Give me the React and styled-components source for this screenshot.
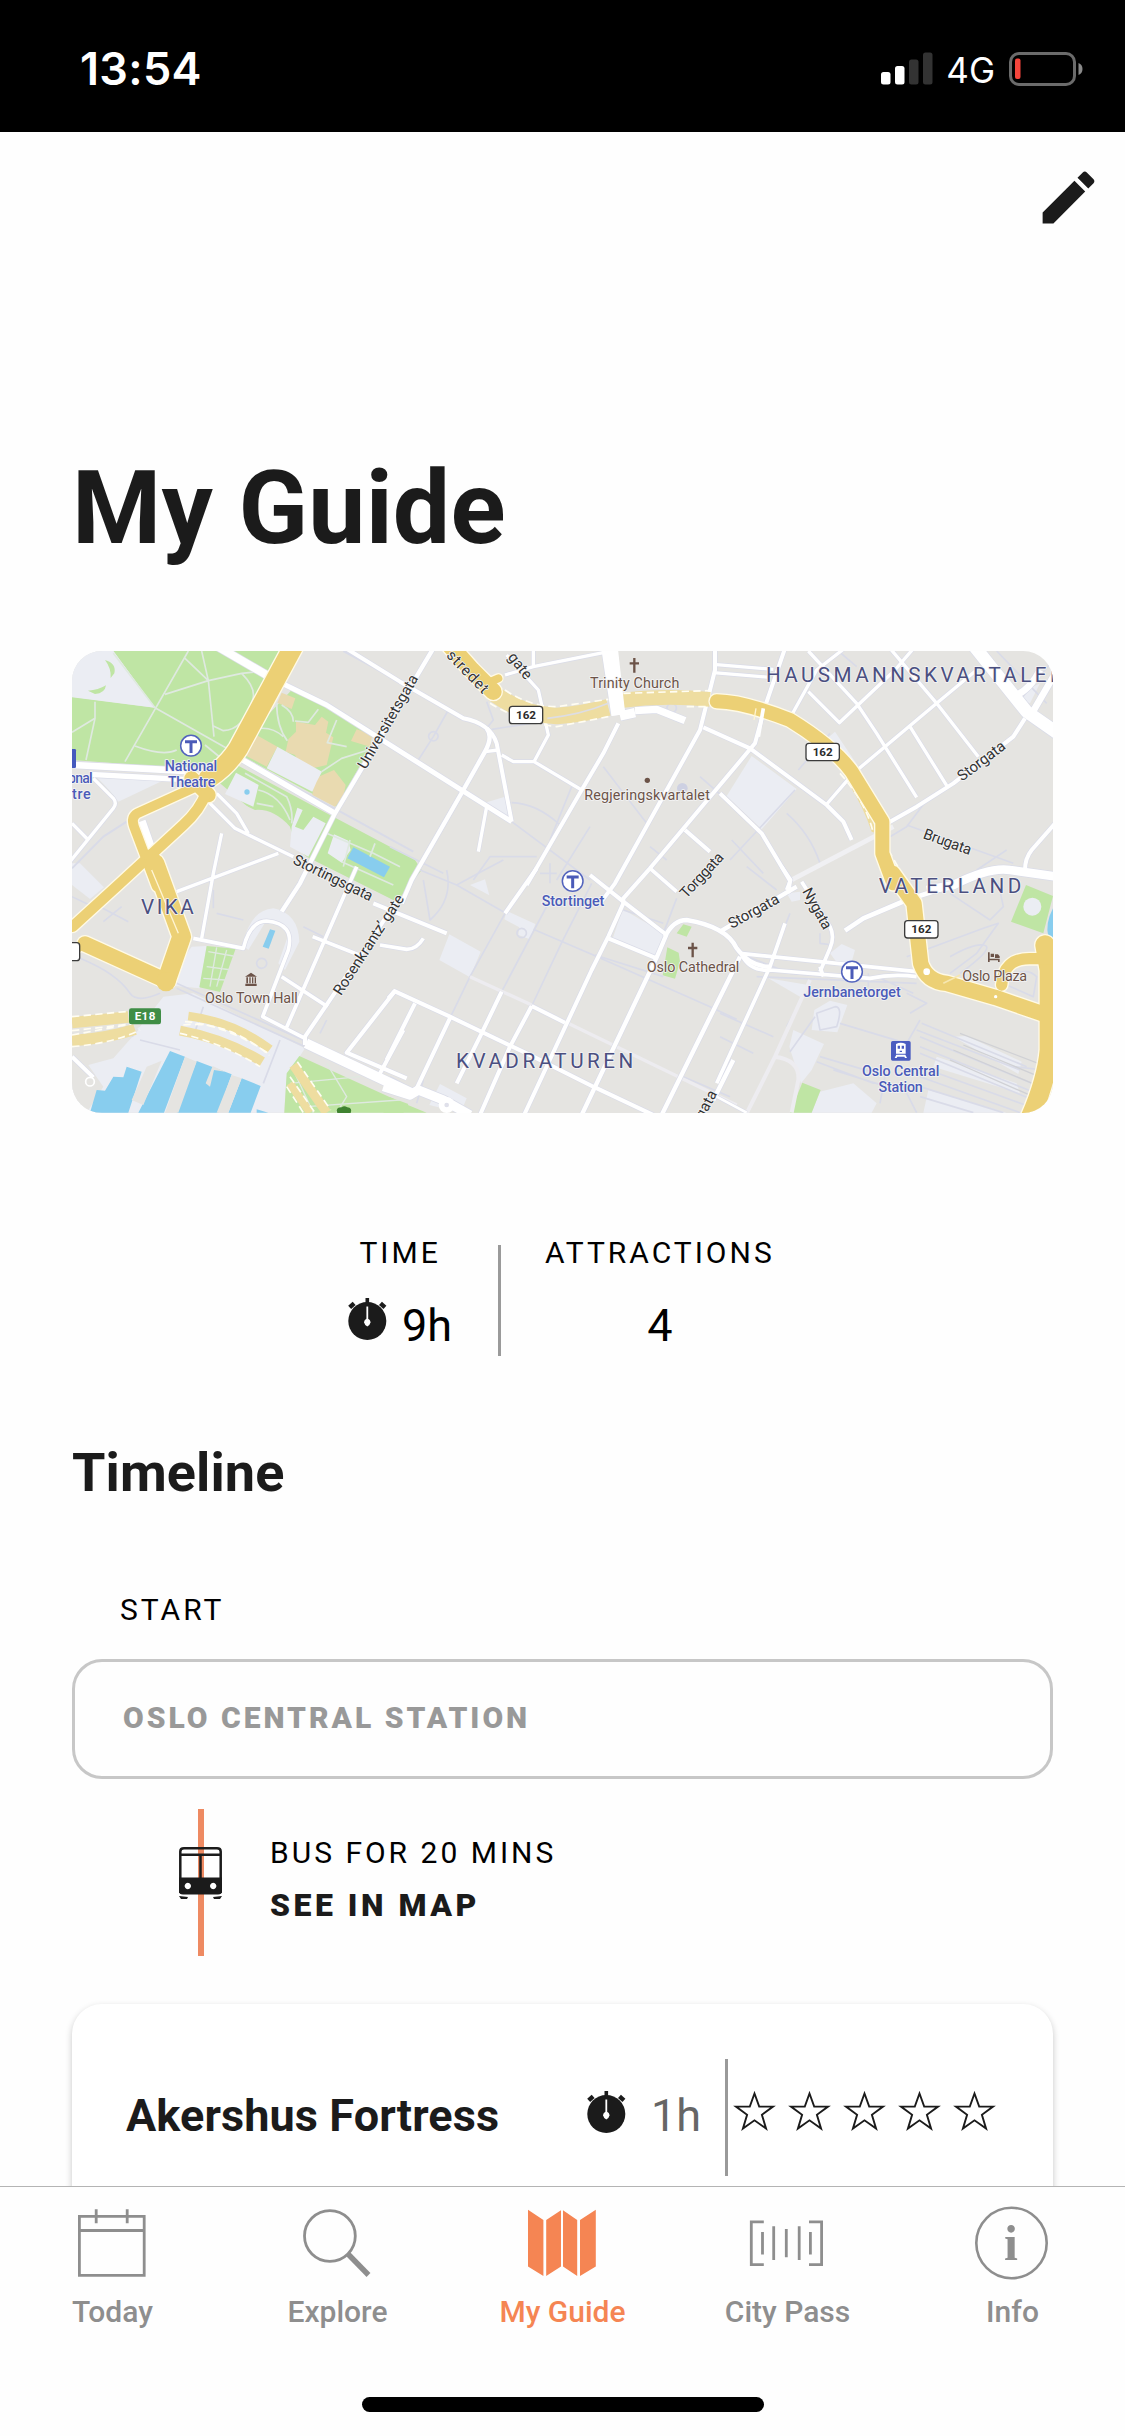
import React from "react";
import styled, { createGlobalStyle } from "styled-components";

const ink = "#1b1b1b";
const orange = "#f58553";
const grey = "#8e8e8e";

const GlobalStyle = createGlobalStyle`
  *, *::before, *::after { box-sizing: border-box; }
  body {
    margin: 0;
    background: #fefefe;
    font-family: Roboto, "Liberation Sans", sans-serif;
    color: #000;
  }
  h1, h2, h3, p { margin: 0; }
  svg { display: block; flex: none; }
`;

const Screen = styled.div`
  width: 1125px;
  height: 2436px;
  display: flex;
  flex-direction: column;
  overflow: hidden;
  background: #fefefe;
`;

/* ---------- status bar ---------- */

const StatusBar = styled.header`
  flex: none;
  height: 132px;
  padding: 6px 42px 0 80px;
  display: flex;
  align-items: center;
  justify-content: space-between;
  background: #000;
  color: #fff;
  font-family: Inter, Roboto, sans-serif;
`;
const Clock = styled.span`
  font-size: 45px;
  font-weight: 600;
  line-height: 54px;
  letter-spacing: 0.3px;
`;
const StatusRight = styled.div`
  display: flex;
  align-items: center;
`;
const Network = styled.span`
  margin: 1px 14px 0 13px;
  font-size: 35px;
  line-height: 40px;
`;

const Signal = () => (
  <svg width="52" height="34" viewBox="0 0 52 34">
    <rect x="0" y="20" width="9.5" height="12.5" rx="2.5" fill="#fff" />
    <rect x="14" y="14" width="9.5" height="18.5" rx="2.5" fill="#fff" />
    <rect x="28" y="7.5" width="9.5" height="25" rx="2.5" fill="#333" />
    <rect x="42" y="0.5" width="9.5" height="32" rx="2.5" fill="#333" />
  </svg>
);

const Battery = () => (
  <svg width="74" height="34" viewBox="0 0 74 34">
    <rect x="1.5" y="1.5" width="64" height="31" rx="8.5" fill="none" stroke="#6b6b6b" strokeWidth="3" />
    <path d="M69.5 11 Q73.5 12.5 73.5 17 T69.5 23 Z" fill="#8a8a8a" />
    <rect x="6" y="6.5" width="5.5" height="20.5" rx="2" fill="#f4453c" />
  </svg>
);

/* ---------- page content ---------- */

const Content = styled.main`
  flex: 1;
  min-height: 0;
  overflow: hidden;
  display: flex;
  flex-direction: column;
  padding: 0 72px;
`;
const Toolbar = styled.div`
  flex: none;
  display: flex;
  justify-content: flex-end;
  margin: 31px -50px 0 0;
`;
const Title = styled.h1`
  flex: none;
  margin-top: 216px;
  font-size: 102px;
  line-height: 120px;
  font-weight: 700;
  letter-spacing: 0.2px;
  color: ${ink};
`;
const MapCard = styled.section`
  flex: none;
  margin-top: 83px;
  height: 462px;
  border-radius: 30px;
  overflow: hidden;
`;
const Stats = styled.section`
  flex: none;
  display: flex;
  align-items: flex-start;
  height: 121px;
  margin-top: 122px;
  padding-left: 276px;
`;
const Stat = styled.div`
  display: flex;
  flex-direction: column;
  align-items: center;
  gap: 28px;
  min-width: ${(p) => p.$width}px;
`;
const Divider = styled.div`
  flex: none;
  width: 3px;
  height: ${(p) => p.$height}px;
  margin: ${(p) => p.$margin};
  background: #9a9a9a;
`;
const Caps = styled.p`
  font-size: 30px;
  line-height: 36px;
  letter-spacing: 3px;
  font-weight: ${(p) => p.$weight || 400};
  color: ${(p) => p.$color || "#000"};
  white-space: nowrap;
`;
const StatValue = styled.div`
  display: flex;
  gap: 15px;
  font-size: 45px;
  line-height: 54px;
  svg { margin-top: -1px; }
`;
const SectionTitle = styled.h2`
  flex: none;
  margin-top: 85px;
  font-size: 54px;
  line-height: 64px;
  font-weight: 700;
  letter-spacing: 0.1px;
  color: ${ink};
`;
const StartLabel = styled.div`
  flex: none;
  margin: 87px 0 31px 48px;
`;
const StartField = styled.div`
  flex: none;
  height: 120px;
  display: flex;
  align-items: center;
  padding: 0 48px 2px;
  border: 3px solid #c7c7c7;
  border-radius: 30px;
`;
const Leg = styled.section`
  flex: none;
  display: flex;
  height: 147px;
  margin-top: 30px;
  padding-left: 107px;
`;
const Track = styled.div`
  width: 43px;
  margin-right: 48px;
  display: flex;
  justify-content: center;
  padding-top: 38px;
  background: linear-gradient(#ee8a62, #ee8a62) center / 6px 100% no-repeat;
`;
const LegText = styled.div`
  display: flex;
  flex-direction: column;
  gap: 16px;
  padding-top: 26px;
`;
const MapLink = styled(Caps)`
  font-size: 32px;
  font-weight: 900;
  letter-spacing: 3.5px;
  color: ${ink};
`;
const Attraction = styled.article`
  flex: none;
  display: flex;
  align-items: flex-start;
  height: 300px;
  margin-top: 48px;
  padding: 55px 54px 0;
  border-radius: 30px;
  background: #fff;
  box-shadow: 0 3px 7px rgba(0, 0, 0, 0.22);
`;
const AttractionName = styled.h3`
  flex: 0 0 461px;
  margin-top: 30px;
  font-size: 45px;
  line-height: 54px;
  font-weight: 700;
  letter-spacing: 0.1px;
  color: ${ink};
`;
const Duration = styled.div`
  flex: 0 0 138px;
  display: flex;
  gap: 25px;
  margin-top: 30px;
  font-size: 45px;
  line-height: 54px;
  color: #666;
  svg { margin-top: 2px; }
`;
const Stars = styled.div`
  display: flex;
  gap: 12px;
  margin: 31px 0 0 5px;
`;

const Stopwatch = () => (
  <svg width="39" height="42" viewBox="0 0 39 42">
    <g fill={ink}>
      <circle cx="19.3" cy="23" r="19" />
      <rect x="17.5" y="0" width="3.6" height="7" />
      <rect x="-3" y="-2.2" width="6" height="4.4" transform="translate(3.9 7.3) rotate(-42)" />
      <rect x="-3" y="-2.2" width="6" height="4.4" transform="translate(34.7 7.3) rotate(42)" />
    </g>
    <path d="M19.3 8.5 V22" stroke="#fff" strokeWidth="1.8" />
    <path d="M19.3 20.5 Q22.6 21.5 22.5 24.5 Q22 27 19.3 28.5 Q16.6 27 16.1 24.5 Q16 21.5 19.3 20.5 Z" fill="#fff" />
  </svg>
);

const Pencil = () => (
  <svg width="69" height="69" viewBox="0 0 24 24" fill={ink}>
    <path d="M3 17.25V21h3.75L17.81 9.94l-3.75-3.75L3 17.25zM20.71 7.04c.39-.39.39-1.02 0-1.41l-2.34-2.34c-.39-.39-1.02-.39-1.41 0l-1.83 1.83 3.75 3.75 1.83-1.83z" />
  </svg>
);

const Bus = () => (
  <svg width="43" height="52" viewBox="0 0 43 52">
    <path d="M1.3 46 V4.5 Q1.3 1.3 5 1.3 H38 Q41.700 1.3 41.7 4.5 V46 M1.3 7.8 H41.7 M21.5 8 V32" fill="none" stroke={ink} strokeWidth="2.5" />
    <path fillRule="evenodd" fill={ink} d="M0 30.5 H43 V44 Q43 47.5 39 47.5 H4 Q0 47.5 0 44 Z M8.8 35.8 a3.2 3.2 0 1 0 .01 0 Z M34.2 35.8 a3.2 3.2 0 1 0 .01 0 Z" />
    <path d="M0 49 L9 50 L8 52 H2 Z M43 49 L34 50 L35 52 H41 Z" fill={ink} />
  </svg>
);

const Star = () => (
  <svg width="43" height="42" viewBox="0 0 43 42">
    <path d="M21.5 3.5 L26.2 16.6 H40 L28.9 24.8 L33.1 38.6 L21.5 30.3 L9.9 38.6 L14.1 24.8 L3 16.6 H16.8 Z" fill="none" stroke={ink} strokeWidth="1.9" />
  </svg>
);

/* ---------- city map ---------- */

/* The city is split into six sectors; each shape is given relative to its sector. */
const NW = "0 0", SW = "0 690", N = "990 0", S = "990 690", NE = "1980 0", SE = "1980 690";
const C = {
  land: "#e5e4e1", park: "#bfe5a4", plaza: "#ebedf3", tan: "#e9dab0", water: "#88cdee",
  yellow: "#ecd075", tunnel: "#eedda0", lav: "#d9dbe8", white: "#fff",
};

const areas = [
  [NW, C.park, "M160 33 H680 L500 360 L375 385 L36 360 V170 L285 203Z"],
  [NW, C.plaza, "M36 33 H160 L285 203 L36 172Z"],
  [NW, C.park, "M135 60 Q170 70 163 100 L152 114 Q154 85 135 60Z M84 152 Q115 150 138 136 Q135 160 105 162Z"],
  [NW, C.park, "M700 145 L935 275 L930 325 L830 500 L550 350 L600 250Z"],
  [NW, C.tan, "M665 158 L706 175 L695 207 L652 188Z M785 230 L805 245 L798 278 L820 292 L800 375 L745 388 L713 362 L705 345 L677 335 L685 298 L708 275 V245 L765 255Z M890 268 L937 285 L930 320 L873 303Z M588 284 L652 320 L620 380 L553 345Z M822 390 L857 435 L850 470 L825 500 L757 465 L765 415Z"],
  [NW, C.plaza, "M652 320 L786 395 L770 425 L757 455 L620 385Z M110 412 H330 L175 485 Q150 450 110 412Z"],
  [NW, C.park, "M525 372 L820 530 L1065 660 L1085 690 L1010 785 L740 650 L480 430Z"],
  [NW, C.land, "M470 455 L585 510 Q640 505 690 560 L705 610 L655 640 L540 570Z"],
  [NW, C.plaza, "M528 398 L596 435 L580 500 L495 462Z M712 503 L728 510 L705 560 L730 570 L760 530 L797 550 L745 650 L690 620 L695 560Z M822 583 L865 602 L872 630 L845 668 L803 640Z"],
  [NW, C.water, "M880 622 L990 680 L972 712 L862 655Z M553 456 a8 8 0 1 0 16 0 a8 8 0 1 0 -16 0Z"],
  [SW, C.plaza, "M36 -20 L60 -20 L132 52 L90 87 L36 45Z"],
  [SW, C.plaza, "M395 230 L440 228 L420 355 L345 348 Q370 260 395 230Z"],
  [SW, C.plaza, "M36 590 L240 470 L310 380 L400 370 L735 535 L680 620 L672 728 H36Z"],
  [SW, C.land, "M36 435 L205 420 L235 480 L160 565 L85 585 L130 650 L80 728 H36Z"],
  [SW, C.water, "M330 543 L375 560 L312 728 H235Z M410 573 L515 613 L475 728 H350Z M545 625 L602 648 L572 728 H505Z M200 590 L245 605 L205 728 H90 L110 660 L135 662 L160 620 L190 622Z M590 718 L625 728 H590Z"],
  [SW, C.land, "M260 590 L305 572 L250 705 L215 690Z M375 560 L410 575 L355 728 H315Z M515 615 L545 625 L505 728 H470Z M437 640 L458 588 L495 605 L462 600 L450 650Z"],
  [SW, C.park, "M440 228 L527 236 L480 366 L418 352Z M718 558 L1020 695 L1100 728 H673 L680 610Z"],
  [SW, C.plaza, "M548 225 Q570 120 640 115 Q715 130 718 215 L675 300 L655 280 L690 180 L620 150 L565 240Z"],
  [SW, C.water, "M630 178 L646 182 L626 236 L608 230Z"],
  [N, C.plaza, "M285 488 L345 470 L355 530Z"],
  [N, "#cdd0e2", "M861 445 a16 16 0 1 0 32 0 a16 16 0 1 0 -32 0Z"],
  [S, C.plaza, "M178 193 L272 245 L240 322 L148 270Z M350 123 L436 162 L420 208 L385 195 L388 172 L343 148Z M698 118 L827 192 L800 262 L668 205Z M240 45 L285 28 L298 76Z M150 642 L230 685 L212 728 L118 705Z"],
  [S, C.park, "M832 232 L866 248 L870 275 L855 326 L818 316Z M880 163 L905 170 L890 200 L860 190Z M0 682 L55 702 L40 728 H-20Z"],
  [NE, C.plaza, "M345 275 L412 375 L375 372 L310 305Z M95 348 L230 447 L125 568 L20 468Z M880 170 L960 130 L930 190Z"],
  [NE, C.tunnel, "M385 430 L425 440 L470 580 L455 575 Q430 500 385 430Z"],
  [SE, C.plaza, "M330 250 L365 222 L405 240 L395 275 L360 290Z M220 480 L312 522 L275 600 L243 640 L208 530Z M283 420 L330 392 L382 405 L352 487 L275 480Z M200 70 L240 65 L240 90 L215 95Z M300 665 L400 640 L470 700 L455 728 H275Z M700 500 L740 498 L905 575 L895 612Z M650 560 L890 640 L900 670 L640 590Z M625 660 L860 728 H610Z M145 325 L265 345 L240 380Z"],
  [SE, C.park, "M918 45 L999 78 L970 190 L873 155Z M247 638 L302 660 L275 728 H210Z"],
  [SE, C.plaza, "M910 110 a27 27 0 1 0 54 0 a27 27 0 1 0 -54 0Z"],
  [SE, C.water, "M999 115 Q975 160 985 200 L999 228Z"],
];

/* Footpaths and service roads: sector, width, path, colour */
const paths = [
  [NW, 5, "M385 33 L195 365 M375 55 L445 122 L315 163 M425 33 L445 122 L462 290 M445 122 L545 100 L620 92 M545 100 Q590 145 578 180 Q550 270 490 272 L460 258 M285 203 L500 325 M105 185 V235 L78 360 M105 235 L36 277 M225 318 Q310 350 350 330 M435 315 L490 360 M160 40 L285 203", "#dfe9e0"],
  [NW, 5, "M650 188 Q650 260 682 302 M665 195 Q700 215 700 245 M705 243 L745 247 L775 208 M600 265 Q640 262 670 290 M830 240 L802 308 L860 320 M925 330 L845 355 L785 395 M555 400 L680 470 Q700 510 695 550 M595 450 Q660 465 690 540 M590 490 L640 500 M800 580 L940 640 L1020 680 M845 665 L1000 735 M870 600 L850 680 M945 610 L930 650", "#dfe9e0"],
  [NW, 6, "M540 350 L1060 635 M850 33 L1020 125 M36 685 L130 590 L200 545", C.lav],
  [SW, 4, "M445 245 L520 258 M440 290 L515 300 M430 325 L495 330 M470 232 L450 350 M500 240 L470 350 M690 640 L900 620 M800 580 L860 680 L830 728 M700 600 L760 728 M740 710 L1020 690", "#dfe9e0"],
  [SW, 5, "M60 265 Q170 310 210 370 Q230 400 300 370 M350 340 L740 515 M350 355 L735 530 M100 100 L205 155 M130 155 L185 110 M460 60 V115 M430 410 L400 500 M660 510 L610 640 M240 510 L360 540 M800 450 L780 490 M605 265 a15 15 0 1 0 .1 0 M200 430 L180 470 L220 500 M36 80 L120 120 M470 130 L550 150 M730 170 L790 200", C.lav],
  [N, 5, "M175 210 L130 290 L85 360 M130 275 a14 14 0 1 0 .1 0 M290 185 L310 240 L290 265 M305 268 L455 245 M455 240 L470 240 M365 488 Q440 490 510 555 M365 545 L600 720 M640 380 L770 550 M545 440 L480 600 M930 410 L1010 480 M780 620 L830 660 M845 190 a14 14 0 1 0 .1 0 M600 560 L500 720 M250 720 L300 650 L440 650 M0 620 L160 700", C.lav],
  [S, 5, "M90 0 L200 45 L345 128 M200 45 L265 10 L340 -30 M100 30 L120 150 Q190 90 170 0 M345 130 L240 320 L182 440 M480 90 L335 365 M605 40 L515 218 L425 408 M430 178 L610 255 L960 410 L1040 448 M615 255 L820 320 M860 85 L820 190 M700 120 L820 160 M395 175 a14 14 0 1 0 .1 0 M880 620 L1020 680 M80 700 L100 630 M0 620 L130 690 M450 10 H500 M480 -20 V40", C.lav],
  [S, 10, "M240 320 L425 405 M525 455 L1040 705", "#edecf0"],
  [NE, 5, "M355 33 L410 80 M225 450 L30 660 M235 390 L330 280 M35 600 L130 700 M560 555 L880 670 M200 520 Q270 580 300 670 M620 480 L560 560 L510 590 M770 690 L860 630 M830 33 L980 190 M1000 60 L900 180", C.lav],
  [NE, 14, "M520 560 L205 725", "#f0f0f3"],
  [SE, 5, "M80 -10 L170 60 M210 130 L170 230 L150 290 M300 190 V220 L340 225 M210 545 L285 440 M70 255 L210 310 L330 320 M110 320 L590 340 M445 310 V350 M470 320 L580 370 M560 260 L790 175 L835 160 L770 250 L690 310 M690 70 L810 150 L850 110 L835 40 M690 260 Q760 220 790 225 Q830 230 720 310 M860 345 L940 380 L950 320 Q920 290 870 320 M300 560 L470 610 M290 575 L460 640 M340 600 L500 650 M270 340 L200 470 M0 430 L160 500 M290 430 L345 410 Q370 410 350 470 L300 480Z M360 460 L560 520 L600 450 M500 590 L480 700 M980 200 L960 260 M570 430 L620 400 L560 370 M590 480 L900 600 M605 460 L920 590 M600 500 L960 650 M600 530 L950 670 M600 550 L940 690 M600 590 L930 710 M600 620 L900 728 M600 650 L850 728 M600 680 L760 728 M550 650 L590 728 M880 590 L970 600 M0 500 L100 550", C.lav],
  [SE, 4, "M720 490 L980 590 M730 525 L970 625 M700 540 L960 650 M690 570 L940 680", "#d0d1d5"],
  [SE, 12, "M270 330 L165 560 L75 740 M165 560 Q240 570 235 630 L215 728", "#edecf0"],
];

/* White streets: sector, width, path */
const streets = [
  [NW, 24, "M470 18 L625 108"],
  [NW, 15, "M650 122 L800 195 L1355 545"],
  [NW, 20, "M40 375 L400 394"],
  [NW, 16, "M90 403 L400 420"],
  [NW, 10, "M100 415 L160 475 Q172 490 160 505 L30 665 M36 550 L85 600 M485 580 L460 700 L425 895 M350 755 L655 640 M440 480 L525 565 L700 650 M470 460 L530 520 L565 580"],
  [NW, 22, "M246 543 L280 640"],
  [NW, 17, "M545 358 L825 520"],
  [NW, 13, "M1120 25 L825 520 L720 730 L665 815"],
  [NW, 12, "M940 790 L1160 880 M850 20 L1020 125 L1210 235 Q1290 250 1310 310 L1355 545"],
  [SW, 11, "M400 205 L550 235 Q570 153 620 153 Q705 160 685 240 L608 440 L735 505 M665 320 L803 410 M890 -10 L680 472 M758 200 L905 258 M960 225 L1040 238 Q1070 238 1090 205"],
  [SW, 12, "M1020 80 L735 500 V525 M1005 363 L860 548 L1040 625 M1030 480 L960 610 M36 560 L100 622"],
  [SW, 30, "M738 520 L1060 672"],
  [N, 13, "M290 265 Q310 290 285 335 L220 450 L65 720 L35 790"],
  [N, 10, "M345 105 L430 80 L640 38 M430 33 V80 M350 45 L445 150 L475 285 L432 365 M285 335 L325 330 M335 345 L370 365 H432 L575 450 M290 500 L265 635"],
  [N, 12, "M685 250 L640 340 L575 450 L410 735"],
  [N, 42, "M655 25 L685 225"],
  [N, 28, "M690 228 L735 218"],
  [N, 22, "M735 212 L800 208 L885 242"],
  [N, 12, "M975 25 V90 L930 270 L675 730 L630 790 M940 262 L1080 325 L1310 495 L1360 545 L1385 600 M885 570 L960 635 M990 460 L1115 580 L1200 722 L1195 760"],
  [N, 12, "M1185 25 L1125 200 L1095 310 L780 685 L700 775 V790 L655 890 L605 990 L400 1430"],
  [N, 11, "M780 685 L860 755"],
  [S, 12, "M600 15 L700 95 L830 195 M655 205 L800 265 M10 362 L180 440 L430 560 L610 650 L790 735 M15 362 L-5 385 M75 400 L-10 570 M440 -5 L345 130 M182 440 L80 655 M335 365 L270 500 L200 640 M425 408 L360 530 L270 735 M425 408 L525 458"],
  [S, 13, "M830 192 L800 262 L575 735 M825 200 Q850 150 890 150 Q1010 170 1040 235 Q1080 290 1140 290 M990 185 L1220 50 M1050 260 L815 735 M1030 570 L970 690"],
  [S, 28, "M-20 650 L60 675 L85 660 L160 690 L240 735"],
  [NE, 10, "M-20 73 L160 88 M-20 98 L150 112 M265 33 L410 190 L470 280 L590 472 M380 20 L290 90 L215 225 M265 155 L358 248 L525 90 L585 20 M510 25 L650 190 L775 350 M318 495 L400 400 L650 190 L770 90 M570 260 L682 440"],
  [NE, 38, "M760 15 L920 215 L1020 285"],
  [NE, 20, "M930 230 L1000 110 M880 170 Q930 150 960 90"],
  [NE, 12, "M915 235 L880 290 L700 430 L590 500 L505 548 M1010 545 L935 630 Q915 655 915 690"],
  [SE, 26, "M620 60 L700 45 Q810 -10 870 0 L1010 20"],
  [SE, 14, "M375 182 L430 145 L560 90 L700 45"],
  [SE, 11, "M185 -10 L212 30 L200 60 M245 35 L330 170 Q345 200 330 235 L300 305 M60 250 L300 275 L590 305 M65 255 Q90 305 150 300 L450 325 Q520 310 590 320 M195 160 L150 290 L-10 640 M300 290 L310 320"],
  [SE, 8, "M-10 680 L80 728"],
];

const tunnels = [
  [SW, 34, "M36 458 L205 441 M36 512 Q140 505 225 478"],
  [SW, 26, "M385 438 Q520 455 630 538"],
  [SW, 30, "M360 482 Q490 505 607 575"],
  [SW, 28, "M700 585 L800 728"],
  [SW, 24, "M690 640 L750 728"],
  [N, 50, "M310 160 Q400 225 500 228 Q580 222 655 202"],
  [N, 44, "M690 182 Q820 165 960 178"],
];
const tunnelEdges = [
  [SW, "M36 440 L205 424 M36 482 L205 463 M36 495 L215 462 M36 530 Q160 520 240 480 M370 465 Q500 450 628 556 M360 490 Q490 520 600 590 M375 455 Q500 465 625 550 M712 575 L812 720 M690 620 L765 728 M680 650 L730 728"],
  [N, "M345 150 Q420 200 500 200 L655 178 M300 190 Q400 250 500 260 L655 230 M700 160 L955 152 M890 200 L960 200"],
  [NE, "M360 400 Q440 490 460 580 M505 630 L545 700"],
];

const highways = [
  [NW, 58, "M708 5 L535 325 Q500 380 445 415"],
  [NW, 44, "M395 415 L445 465"],
  [NW, 29, "M430 430 L232 520 Q212 532 222 560 L290 740"],
  [NW, 32, "M440 455 Q420 510 370 555 L180 730 L38 860"],
  [NW, 46, "M275 650 L350 850"],
  [SW, 56, "M285 -20 L365 200 L320 330"],
  [SW, 46, "M75 222 L318 332"],
  [SW, 22, "M80 215 L50 240"],
  [N, 50, "M170 5 L245 90 L310 155"],
  [N, 24, "M290 130 L325 115"],
  [N, 42, "M980 184 Q1060 185 1200 240 Q1330 320 1385 395 L1477 545 V640 L1510 730"],
  [SE, 46, "M518 10 L582 100 L602 280 Q620 335 680 340 L825 382 L970 432"],
  [SE, 58, "M975 225 L988 300 V540 Q980 630 930 745"],
  [SE, 34, "M845 345 Q850 265 930 266 L1010 266"],
];

/* Labels: x, y, text, kind, drawn length, angle */
const labels = [
  [393, 393, "National", "blue", 157], [395, 441, "Theatre", "blue", 142],
  [1539, 799, "Stortinget", "blue", 188], [2376, 1072, "Jernbanetorget", "blue", 292],
  [2522, 1308, "Oslo Central", "blue", 232], [2522, 1355, "Station", "blue", 133],
  [1724, 143, "Trinity Church", "brown", 268], [1761, 480, "Regjeringskvartalet", "brown", 377],
  [1899, 995, "Oslo Cathedral", "brown", 278], [2804, 1022, "Oslo Plaza", "brown", 194],
  [574, 1088, "Oslo Town Hall", "brown", 278],
];
const startLabels = [
  [243, 821, "VIKA", "area", 158, 0], [1188, 1283, "KVADRATUREN", "area", 532, 0],
  [2118, 127, "HAUSMANNSKVARTALEN", "area", 896, 0], [2456, 760, "VATERLAND", "area", 428, 0],
  [24, 430, "onal", "blue", 74, 0], [36, 478, "tre", "blue", 56, 0],
  [917, 390, "Universitetsgata", "road", 318, -60], [696, 670, "Stortingsgata", "road", 260, 26],
  [843, 1069, "Rosenkrantz’ gate", "road", 350, -57], [1157, 48, "stredet", "road", 160, 46],
  [1342, 52, "gate", "road", 88, 52], [1879, 777, "Torggata", "road", 168, -47],
  [2015, 867, "Storgata", "road", 167, -29], [2706, 425, "Storgata", "road", 167, -37],
  [2226, 754, "Nygata", "road", 135, 61], [2587, 594, "Brugata", "road", 150, 20],
  [1930, 1440, "gata", "road", 90, -62],
];
const labelStyle = {
  blue: { fill: "#4b5bb8", size: 43, weight: 500 },
  brown: { fill: "#6c5348", size: 43, weight: 400 },
  area: { fill: "#4b4f80", size: 62, weight: 400 },
  road: { fill: "#333", size: 45, weight: 400 },
};

const Label = ({ item, anchor }) => {
  const [x, y, text, kind, length, angle = 0] = item;
  const s = labelStyle[kind];
  return (
    <text
      transform={`translate(${x} ${y}) rotate(${angle})`}
      textAnchor={anchor}
      textLength={length}
      fontSize={s.size}
      fontWeight={s.weight}
      fill={s.fill}
      stroke="#f4f4f5"
      strokeWidth="5"
      strokeLinejoin="round"
      paintOrder="stroke"
    >
      {text}
    </text>
  );
};

const Lines = ({ items, color, extra = 0 }) =>
  items.map(([sector, width, d, own], i) => (
    <path key={i} transform={`translate(${sector})`} d={d} stroke={own || color} strokeWidth={width + extra} />
  ));

const Metro = ({ x, y }) => (
  <g transform={`translate(${x} ${y})`}>
    <circle r="31" fill="#fff" stroke="#5263bd" strokeWidth="4.5" />
    <path d="M-18 -12 H18 M0 -12 V22" stroke="#4b5bb8" strokeWidth="9" fill="none" />
  </g>
);
const Cross = ({ x, y }) => (
  <path transform={`translate(${x} ${y})`} d="M0 -22 V22 M-14 -6 H14" stroke="#6c5348" strokeWidth="7" />
);
const RouteBadge = ({ x, y }) => (
  <g transform={`translate(${x} ${y})`}>
    <rect x="-50" y="-26" width="100" height="52" rx="9" fill="#fff" stroke="#3b3b3b" strokeWidth="4" />
    <text y="12" textAnchor="middle" fontSize="35" fontWeight="700" fill="#2b2b2b" textLength="60">162</text>
  </g>
);

const CityMap = () => (
  <svg width="981" height="462" viewBox="36 33 2943 1386" preserveAspectRatio="none" fontFamily="Roboto, sans-serif">
    <rect x="36" y="33" width="2943" height="1386" fill={C.land} />
    {areas.map(([sector, fill, d], i) => (
      <path key={i} transform={`translate(${sector})`} d={d} fill={fill} />
    ))}
    <g fill="none" strokeLinejoin="round">
      <Lines items={paths} color={C.lav} />
      <Lines items={streets} color="#dadce8" extra={4} />
      <Lines items={streets} color={C.white} />
      <Lines items={tunnels} color={C.tunnel} />
      {tunnelEdges.map(([sector, d], i) => (
        <path key={i} transform={`translate(${sector})`} d={d} stroke="#fffdf2" strokeWidth="5" strokeDasharray="22 13" />
      ))}
      <path d="M1462 235 Q1560 225 1645 190" stroke="#dddde4" strokeWidth="5" />
      <path d="M1653 20 L1676 225" stroke="#fff" strokeWidth="40" />
      <g strokeLinecap="round">
        <Lines items={highways} color="#fffae6" extra={8} />
        <Lines items={highways} color={C.yellow} />
      </g>
      <path d="M275 690 L355 880 M2088 205 L2082 240" stroke="#fff5d2" strokeWidth="4" />
      <path d="M2110 205 L2095 290" stroke="#fff" strokeWidth="11" />
      <path d="M2650 1030 L2700 1005" stroke="#f6e7b1" strokeWidth="5" />
    </g>
    <circle cx="318" cy="1025" r="29" fill={C.yellow} />
    <circle cx="2600" cy="995" r="10" fill="#fff" />
    <circle cx="2807" cy="1070" r="5" fill="#fff" />
    <circle cx="1160" cy="1395" r="24" fill="#fff" />
    <circle cx="1160" cy="1395" r="7" fill="#dfe0ea" />
    <circle cx="90" cy="1325" r="13" fill={C.land} stroke="#fff" strokeWidth="5" />
    <path d="M832 1419 Q825 1402 845 1402 Q852 1395 862 1402 Q878 1404 872 1419Z" fill="#3f8230" />

    <rect x="24" y="327" width="24" height="57" rx="4" fill="#4459bd" />
    <Metro x={393} y={317} />
    <Metro x={1538} y={723} />
    <Metro x={2376} y={995} />
    <Cross x={1723} y={76} />
    <Cross x={1898} y={930} />
    <circle cx="1762" cy="421" r="8" fill="#6c5348" />
    <g transform="translate(573 1018)" fill="#6c5348">
      <path d="M-18 -8 L0 -20 L18 -8Z M-14 -6 H-9 V12 H-14Z M-5 -6 H-1 V12 H-5Z M3 -6 H7 V12 H3Z M11 -6 H15 V12 H11Z M-17 13 H17 V20 H-17Z" />
    </g>
    <g transform="translate(2802 953)" fill="#6c5348">
      <path d="M-18 -16 H-13 V3 H17 V13 H12 V8 H-13 V13 H-18Z M-10 -12 H0 V-2 H-10Z M3 -10 H12 L17 -4 V1 H3Z" />
    </g>
    <g transform="translate(2522 1232)">
      <rect x="-29" y="-29" width="59" height="59" rx="5" fill="#4b5dc0" />
      <path fill="#fff" fillRule="evenodd" d="M-14 -20 Q0 -27 15 -20 V9 H-14Z M-9 -15 V-6 H-2 V-15Z M3 -15 V-6 H10 V-15Z M-3 0 H4 V4 H-3Z M-10 11 L-14 21 M-13 12 L-18 22 H-12 L-10 18 H11 L13 22 H19 L14 12Z" />
    </g>
    <rect x="207" y="1105" width="96" height="48" rx="7" fill="#3f8d45" />
    <text x="255" y="1141" textAnchor="middle" fontSize="35" fontWeight="700" fill="#fff" textLength="62">E18</text>
    <RouteBadge x={1398} y={225} />
    <RouteBadge x={2288} y={336} />
    <RouteBadge x={2584} y={868} />
    <rect x="-40" y="908" width="99" height="54" rx="9" fill="#fff" stroke="#3b3b3b" strokeWidth="4" />

    {labels.map((item, i) => <Label key={i} item={item} anchor="middle" />)}
    {startLabels.map((item, i) => <Label key={i} item={item} anchor="start" />)}
  </svg>
);

/* ---------- tab bar ---------- */

const TabBar = styled.nav`
  flex: none;
  height: 250px;
  border-top: 1px solid #b4b4b4;
  background: #fefefe;
`;
const Tabs = styled.div`
  display: grid;
  grid-template-columns: repeat(5, 1fr);
  padding-top: 19px;
`;
const Tab = styled.div`
  display: flex;
  flex-direction: column;
  align-items: center;
  gap: 14px;
  color: ${(p) => (p.$active ? orange : grey)};
`;
const TabLabel = styled.span`
  font-size: 30px;
  line-height: 36px;
  font-weight: 500;
`;
const HomeIndicator = styled.div`
  width: 402px;
  height: 15px;
  margin: 67px auto 0;
  border-radius: 8px;
  background: #000;
`;

const TabIcon = ({ children }) => (
  <svg width="85" height="74" viewBox="0 0 85 74" fill="none" stroke="currentColor" strokeWidth="2.8">
    {children}
  </svg>
);

const tabs = [
  ["Today", <path d="M9.4 10.4 H74.2 V69.3 H9.4 Z M9.4 24.5 H74.2 M26.2 3.3 V17.3 M57.2 3.3 V17.3" />],
  ["Explore", <>
    <circle cx="34.9" cy="30" r="25.4" />
    <path d="M52.5 47.5 L73.5 69" strokeWidth="5.4" />
  </>],
  ["My Guide", <path fill="currentColor" stroke="none" d="M8 3.7 L23.4 14 V70 L8 60.5Z M26.2 14 L41 4.2 V60.5 L26.2 70Z M43 4.2 L57.2 14 V70 L43 60.5Z M60 14 L75.8 3.7 V60.5 L60 70Z" />],
  ["City Pass", <path d="M18.8 15.9 H6.3 V58.7 H18.8 M64 15.9 H76.6 V58.7 H64 M17.5 26 V48.5 M28.7 20.3 V54 M41.3 23 V51.2 M54.2 20.3 V54 M65.4 26 V48.5" />],
  ["Info", <>
    <circle cx="41.5" cy="37" r="35.2" strokeWidth="2.6" />
    <text x="41" y="54" textAnchor="middle" fontFamily="Liberation Serif, serif" fontWeight="700" fontSize="50" fill="currentColor" stroke="none">i</text>
  </>],
];

export default function App() {
  return (
    <Screen>
      <GlobalStyle />
      <StatusBar>
        <Clock>13:54</Clock>
        <StatusRight>
          <Signal />
          <Network>4G</Network>
          <Battery />
        </StatusRight>
      </StatusBar>

      <Content>
        <Toolbar><Pencil /></Toolbar>
        <Title>My Guide</Title>
        <MapCard><CityMap /></MapCard>

        <Stats>
          <Stat $width={102}>
            <Caps>TIME</Caps>
            <StatValue><Stopwatch />9h</StatValue>
          </Stat>
          <Divider $height={111} $margin="10px 44px 0 46px" />
          <Stat>
            <Caps>ATTRACTIONS</Caps>
            <StatValue>4</StatValue>
          </Stat>
        </Stats>

        <SectionTitle>Timeline</SectionTitle>
        <StartLabel><Caps>START</Caps></StartLabel>
        <StartField><Caps $weight={900} $color="#999">OSLO CENTRAL STATION</Caps></StartField>

        <Leg>
          <Track><Bus /></Track>
          <LegText>
            <Caps>BUS FOR 20 MINS</Caps>
            <MapLink>SEE IN MAP</MapLink>
          </LegText>
        </Leg>

        <Attraction>
          <AttractionName>Akershus Fortress</AttractionName>
          <Duration><Stopwatch />1h</Duration>
          <Divider $height={117} $margin="0" />
          <Stars>{[1, 2, 3, 4, 5].map((n) => <Star key={n} />)}</Stars>
        </Attraction>
      </Content>

      <TabBar>
        <Tabs>
          {tabs.map(([name, icon]) => (
            <Tab key={name} $active={name === "My Guide"}>
              <TabIcon>{icon}</TabIcon>
              <TabLabel>{name}</TabLabel>
            </Tab>
          ))}
        </Tabs>
        <HomeIndicator />
      </TabBar>
    </Screen>
  );
}
